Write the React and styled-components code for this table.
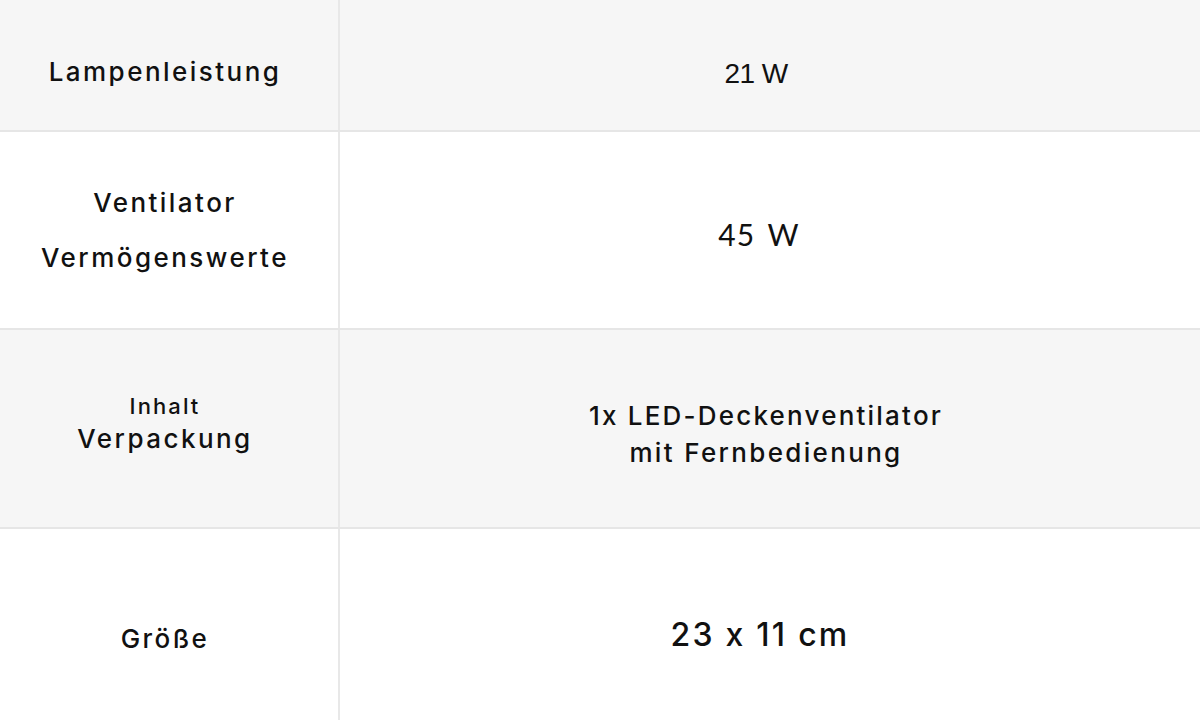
import styled, { createGlobalStyle } from "styled-components"

const Global = createGlobalStyle`
	html, body {
		margin: 0;
		padding: 0;
		background: #ffffff;
	}
	body {
		font-family: Inter, "Noto Sans", sans-serif;
		color: #111111;
	}
`

const Table = styled.div`
	width: 1200px;
	height: 720px;
	overflow: hidden;
	display: flex;
	flex-direction: column;
`

const Row = styled.div`
	display: grid;
	grid-template-columns: 340px 1fr;
	height: ${({ h }) => h}px;
	flex: none;
	background: ${({ shaded }) => (shaded ? "#f6f6f6" : "#ffffff")};
	border-bottom: ${({ last }) => (last ? "none" : "2px solid #e6e6e6")};
	box-sizing: border-box;
`

// shift > 0 pushes content down, shift < 0 pulls it up
const Cell = styled.div`
	display: flex;
	flex-direction: column;
	align-items: center;
	justify-content: center;
	gap: ${({ gap }) => gap || 0}px;
	padding-top: ${({ shift = 0 }) => Math.max(shift, 0)}px;
	padding-bottom: ${({ shift = 0 }) => Math.max(-shift, 0)}px;
	padding-right: ${({ right }) => right || 0}px;
	box-sizing: border-box;
	text-align: center;
`

const Label = styled(Cell)`
	border-right: 2px solid #e8e8e8;
`

const LabelText = styled.span`
	font-family: Inter, "Noto Sans", sans-serif;
	font-weight: 500;
	font-size: ${({ size }) => size || 26}px;
	letter-spacing: 0.095em;
	line-height: 1.2;
`

const PlainValue = styled.span`
	font-family: "Liberation Sans", Arial, sans-serif;
	font-size: 28px;
	letter-spacing: -0.02em;
	line-height: 1.2;
`

const LightValue = styled.span`
	font-family: Lato, sans-serif;
	font-size: 30px;
	letter-spacing: 0.04em;
	word-spacing: 0.12em;
	line-height: 1.2;
`

const BoldValue = styled.span`
	font-family: Inter, "Noto Sans", sans-serif;
	font-weight: 500;
	font-size: ${({ size }) => size || 26}px;
	letter-spacing: ${({ spacing }) => spacing || 0.09}em;
	line-height: ${({ lh }) => lh || 37}px;
`

export default function App() {
	return (
		<>
			<Global />
			<Table>
				<Row h={132} shaded>
					<Label shift={14} right={8}>
						<LabelText>Lampenleistung</LabelText>
					</Label>
					<Cell shift={17} right={28}>
						<PlainValue>21 W</PlainValue>
					</Cell>
				</Row>
				<Row h={198}>
					<Label gap={24} shift={0} right={8}>
						<LabelText>Ventilator</LabelText>
						<LabelText>Vermögenswerte</LabelText>
					</Label>
					<Cell shift={7} right={22}>
						<LightValue>45 W</LightValue>
					</Cell>
				</Row>
				<Row h={199} shaded>
					<Label gap={3} shift={-10} right={8}>
						<LabelText size={22}>Inhalt</LabelText>
						<LabelText>Verpackung</LabelText>
					</Label>
					<Cell shift={11} right={8}>
						<BoldValue spacing={0.085}>1x LED-Deckenventilator</BoldValue>
						<BoldValue>mit Fernbedienung</BoldValue>
					</Cell>
				</Row>
				<Row h={191} last>
					<Label shift={29} right={8}>
						<LabelText>Größe</LabelText>
					</Label>
					<Cell shift={20} right={20}>
						<BoldValue size={32} spacing={0.07} lh={40}>23 x 11 cm</BoldValue>
					</Cell>
				</Row>
			</Table>
		</>
	)
}
